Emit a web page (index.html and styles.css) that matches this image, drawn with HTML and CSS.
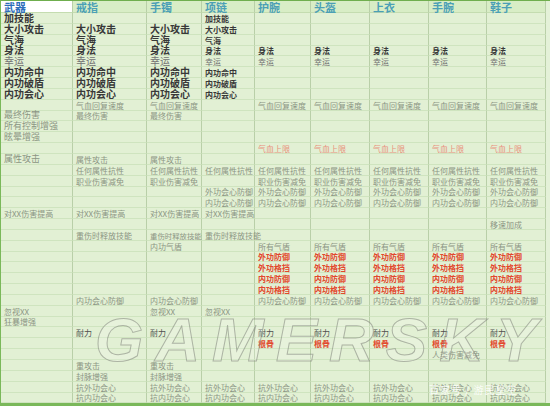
FILE: index.html
```html
<!DOCTYPE html>
<html lang="zh">
<head>
<meta charset="utf-8">
<title>装备属性表</title>
<link rel="stylesheet" href="styles.css">
</head>
<body>
<div class="page">
  <div class="sheet">
    <div class="hd first">武器</div><div class="hd">戒指</div><div class="hd">手镯</div><div class="hd">项链</div><div class="hd">护腕</div><div class="hd">头盔</div><div class="hd">上衣</div><div class="hd">手腕</div><div class="hd">鞋子</div>

    <div class="big bold">加技能</div><div></div><div></div><div class="bold">加技能</div><div></div><div></div><div></div><div></div><div></div>
    <div class="big bold">大小攻击</div><div class="big bold">大小攻击</div><div class="big bold">大小攻击</div><div class="bold">大小攻击</div><div></div><div></div><div></div><div></div><div></div>
    <div class="big bold">气海</div><div class="big bold">气海</div><div class="big bold">气海</div><div class="bold">气海</div><div></div><div></div><div></div><div></div><div></div>
    <div class="big bold">身法</div><div class="big bold">身法</div><div class="big bold">身法</div><div class="bold">身法</div><div class="bold">身法</div><div class="bold">身法</div><div class="bold">身法</div><div class="bold">身法</div><div class="bold">身法</div>
    <div class="big soft">幸运</div><div class="big soft">幸运</div><div class="big soft">幸运</div><div class="soft">幸运</div><div class="soft">幸运</div><div class="soft">幸运</div><div class="soft">幸运</div><div class="soft">幸运</div><div class="soft">幸运</div>
    <div class="big bold">内功命中</div><div class="big bold">内功命中</div><div class="big bold">内功命中</div><div class="bold">内功命中</div><div></div><div></div><div></div><div></div><div></div>
    <div class="big bold">内功破盾</div><div class="big bold">内功破盾</div><div class="big bold">内功破盾</div><div class="bold">内功破盾</div><div></div><div></div><div></div><div></div><div></div>
    <div class="big bold">内功会心</div><div class="big bold">内功会心</div><div class="big bold">内功会心</div><div class="bold">内功会心</div><div></div><div></div><div></div><div></div><div></div>
    <div></div><div>气血回复速度</div><div>气血回复速度</div><div></div><div>气血回复速度</div><div>气血回复速度</div><div>气血回复速度</div><div>气血回复速度</div><div>气血回复速度</div>
    <div class="mid">最终伤害</div><div>最终伤害</div><div>最终伤害</div><div></div><div></div><div></div><div></div><div></div><div></div>
    <div class="mid">所有控制增强</div><div></div><div></div><div></div><div></div><div></div><div></div><div></div><div></div>
    <div class="mid">眩晕增强</div><div></div><div></div><div></div><div></div><div></div><div></div><div></div><div></div>
    <div></div><div></div><div></div><div></div><div class="pink">气血上限</div><div class="pink">气血上限</div><div class="pink">气血上限</div><div class="pink">气血上限</div><div class="pink">气血上限</div>
    <div class="mid">属性攻击</div><div>属性攻击</div><div>属性攻击</div><div></div><div></div><div></div><div></div><div></div><div></div>
    <div></div><div>任何属性抗性</div><div>任何属性抗性</div><div>任何属性抗性</div><div>任何属性抗性</div><div>任何属性抗性</div><div>任何属性抗性</div><div>任何属性抗性</div><div>任何属性抗性</div>
    <div></div><div>职业伤害减免</div><div>职业伤害减免</div><div></div><div>职业伤害减免</div><div>职业伤害减免</div><div>职业伤害减免</div><div>职业伤害减免</div><div>职业伤害减免</div>
    <div></div><div></div><div></div><div>外功会心防御</div><div>外功会心防御</div><div>外功会心防御</div><div>外功会心防御</div><div>外功会心防御</div><div>外功会心防御</div>
    <div></div><div></div><div></div><div>内功会心防御</div><div>内功会心防御</div><div>内功会心防御</div><div>内功会心防御</div><div>内功会心防御</div><div>内功会心防御</div>
    <div>对XX伤害提高</div><div>对XX伤害提高</div><div>对XX伤害提高</div><div>对XX伤害提高</div><div></div><div></div><div></div><div></div><div></div>
    <div></div><div></div><div></div><div></div><div></div><div></div><div></div><div></div><div>移速加成</div>
    <div></div><div>重伤时释放技能</div><div class="tight">重伤时释放技能</div><div>重伤时释放技能</div><div></div><div></div><div></div><div></div><div></div>
    <div></div><div></div><div>内功气盾</div><div></div><div>所有气盾</div><div>所有气盾</div><div>所有气盾</div><div>所有气盾</div><div>所有气盾</div>
    <div></div><div></div><div></div><div></div><div class="red">外功防御</div><div class="red">外功防御</div><div class="red">外功防御</div><div class="red">外功防御</div><div class="red">外功防御</div>
    <div></div><div></div><div></div><div></div><div class="red">外功格挡</div><div class="red">外功格挡</div><div class="red">外功格挡</div><div class="red">外功格挡</div><div class="red">外功格挡</div>
    <div></div><div></div><div></div><div></div><div class="red">内功防御</div><div class="red">内功防御</div><div class="red">内功防御</div><div class="red">内功防御</div><div class="red">内功防御</div>
    <div></div><div></div><div></div><div></div><div class="red">内功格挡</div><div class="red">内功格挡</div><div class="red">内功格挡</div><div class="red">内功格挡</div><div class="red">内功格挡</div>
    <div></div><div>内功会心防御</div><div>内功会心防御</div><div></div><div>内功会心防御</div><div>内功会心防御</div><div>内功会心防御</div><div>内功会心防御</div><div>内功会心防御</div>
    <div>忽视XX</div><div></div><div>忽视XX</div><div>忽视XX</div><div></div><div></div><div></div><div></div><div></div>
    <div>狂暴增强</div><div></div><div></div><div></div><div></div><div></div><div></div><div></div><div></div>
    <div></div><div class="dark">耐力</div><div class="dark">耐力</div><div></div><div class="dark">耐力</div><div class="dark">耐力</div><div class="dark">耐力</div><div class="dark">耐力</div><div class="dark">耐力</div>
    <div></div><div></div><div></div><div></div><div class="red">根骨</div><div class="red">根骨</div><div class="red">根骨</div><div class="red">根骨</div><div class="red">根骨</div>
    <div></div><div></div><div></div><div></div><div></div><div></div><div></div><div>人类伤害减免</div><div></div>
    <div></div><div>重攻击</div><div>重攻击</div><div></div><div></div><div></div><div></div><div></div><div></div>
    <div></div><div>封脉增强</div><div>封脉增强</div><div></div><div></div><div></div><div></div><div></div><div></div>
    <div></div><div>抗外功会心</div><div>抗外功会心</div><div>抗外功会心</div><div>抗外功会心</div><div>抗外功会心</div><div>抗外功会心</div><div>抗外功会心</div><div>抗外功会心</div>
    <div></div><div>抗内功会心</div><div>抗内功会心</div><div>抗内功会心</div><div>抗内功会心</div><div>抗内功会心</div><div>抗内功会心</div><div>抗内功会心</div><div>抗内功会心</div>
  </div>
  <div class="watermark">GAMERSKY</div>
  <div class="credit">百家号 / 游民星空</div>
</div>
</body>
</html>
```

FILE: styles.css
```css
html, body {
  margin: 0;
  padding: 0;
}

body {
  width: 550px;
  height: 406px;
  overflow: hidden;
  background: #e4f1d8;
  font-family: "Noto Sans CJK SC", "Noto Sans", sans-serif;
}

.page {
  position: relative;
  width: 550px;
  height: 406px;
  box-sizing: border-box;
  border-top: 1px solid #6fae4e;
  border-left: 1px solid #7ab85a;
  border-bottom: 3px solid #7ab85a;
  background: #e4f1d8;
  overflow: hidden;
}

.sheet {
  display: grid;
  grid-template-columns: 72px 74px 55px 53px 56px 59px 59px 58px 59px;
  grid-template-rows: 12px repeat(36, 10.85px);
  width: 545px;
  background: #e2f0d4;
}

.sheet > div {
  box-sizing: border-box;
  border-right: 1px solid #b9cfa8;
  border-bottom: 1px solid #cfe4bf;
  padding-left: 3px;
  display: flex;
  align-items: flex-end;
  white-space: nowrap;
  font-size: 8px;
  line-height: 9px;
  color: #8b9583;
}

.sheet > .hd {
  font-size: 11px;
  line-height: 12px;
  font-weight: 700;
  color: #4b9fb6;
  background: #d8edc6;
  border-bottom-color: #c4dcb0;
  align-items: center;
}

.sheet > .first {
  background: #ffffff;
  color: #2c6db9;
}

.sheet > .big {
  font-size: 10px;
  line-height: 10px;
}

.sheet > .mid {
  font-size: 9px;
  line-height: 10px;
}

.sheet > .bold {
  font-weight: 700;
  color: #383838;
}

.sheet > .soft {
  color: #737373;
}

.sheet > .pink {
  color: #e9907e;
}

.sheet > .red {
  font-weight: 700;
  color: #e2472c;
}

.sheet > .dark {
  color: #505050;
}

.sheet > .tight {
  font-size: 7.4px;
}

.watermark {
  position: absolute;
  left: 94px;
  top: 308px;
  font-family: "Liberation Sans", Arial, sans-serif;
  font-size: 62px;
  line-height: 1;
  font-weight: 700;
  font-style: italic;
  letter-spacing: 12px;
  color: rgba(255, 255, 255, 0.18);
  -webkit-text-stroke: 1px rgba(125, 130, 120, 0.55);
  pointer-events: none;
}

.credit {
  position: absolute;
  left: 428px;
  top: 383px;
  font-size: 10px;
  line-height: 12px;
  color: rgba(255, 255, 255, 0.85);
  letter-spacing: 1px;
}
```
